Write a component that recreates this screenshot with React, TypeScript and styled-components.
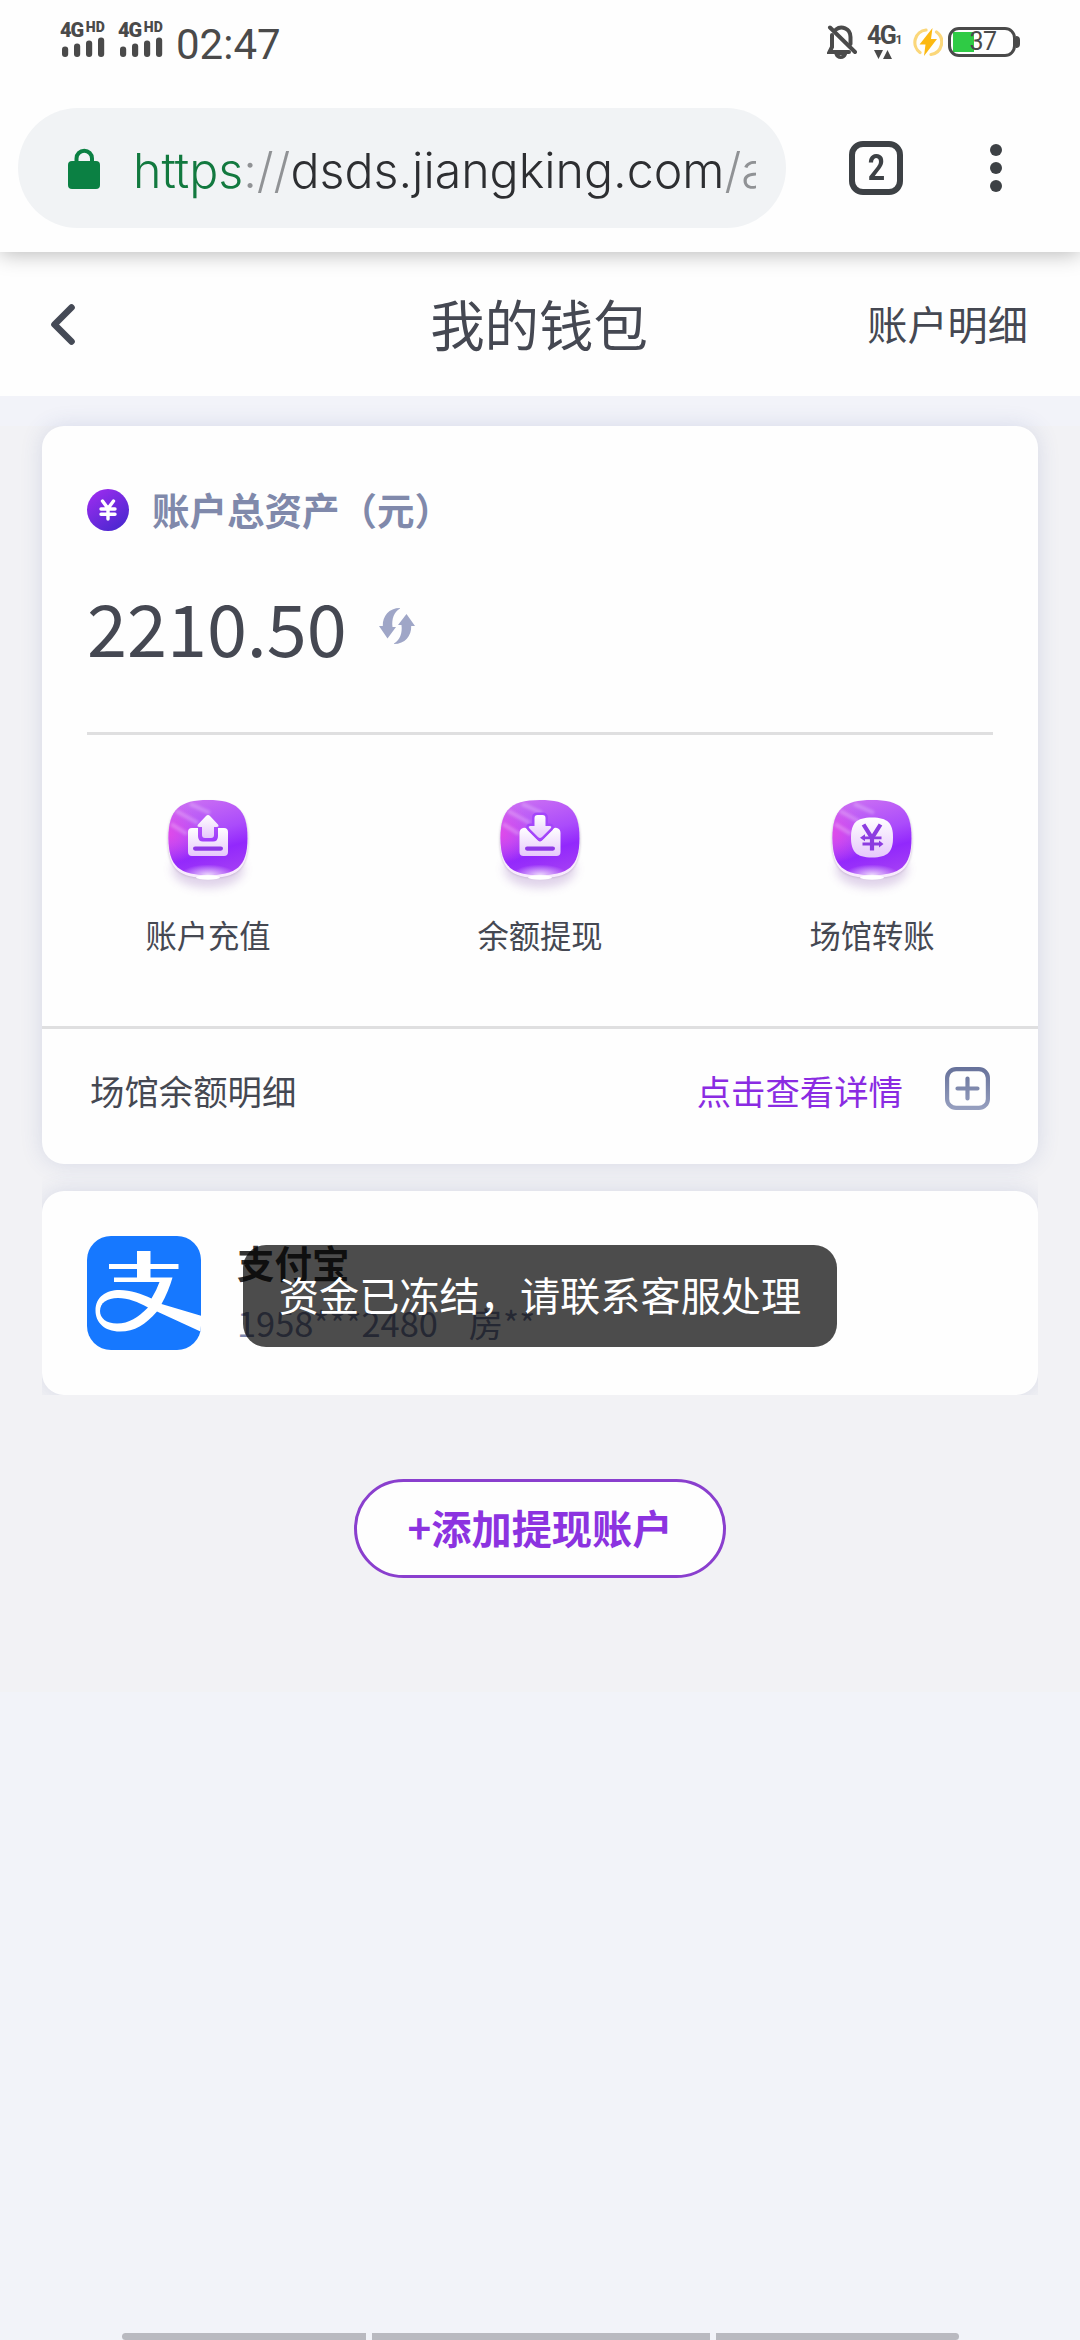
import React from "react";
import styled, { createGlobalStyle } from "styled-components";

const cjk = `"Noto Sans CJK SC", "Noto Sans", sans-serif`;

const GlobalStyle = createGlobalStyle`
  *, *::before, *::after { box-sizing: border-box; }
  body { margin: 0; background: #f2f3f9; font-family: ${cjk}; color: #454852; }
  button { font: inherit; color: inherit; background: none; border: 0; padding: 0; }
  svg { display: block; flex: none; }
`;

const Screen = styled.div`
  position: relative;
  width: 1080px;
  height: 2340px;
  overflow: hidden;
  display: flex;
  flex-direction: column;
`;

const StatusBar = styled.div`
  position: relative;
  z-index: 2;
  height: 84px;
  flex: none;
  background: #fefefe;
  display: flex;
  align-items: flex-start;
  justify-content: space-between;
  padding: 0 60px;
  color: #4a4a4a;
  font-family: Roboto, sans-serif;
`;

const StatusGroup = styled.div`
  display: flex;
  align-items: flex-start;
`;

const Signal = styled.div`
  width: 58px;
  padding-top: 20px;
`;

const NetLabel = styled.div`
  display: flex;
  align-items: flex-start;
  height: 17px;
  font-size: 20px;
  line-height: 20px;
  font-weight: 900;
  letter-spacing: -1.2px;
`;

const HdLabel = styled.span`
  font-size: 14px;
  line-height: 15px;
  letter-spacing: 0;
  margin-left: 3px;
`;

const Time = styled.div`
  font-size: 42px;
  line-height: 48px;
  padding-top: 21px;
`;

const MobileData = styled.div`
  width: 36px;
  margin: 24px 10px 0 10px;
  font-size: 25px;
  line-height: 24px;
  font-weight: 700;
  letter-spacing: -1.5px;
  white-space: nowrap;
  small { font-size: 12px; }
`;

const Battery = styled.div`
  margin: 27px 0 0 5px;
  display: flex;
  align-items: center;
`;

const BatteryShell = styled.div`
  width: 68px;
  height: 30px;
  border: 3px solid #4a4a4a;
  border-radius: 11px;
  padding-left: 2px;
  display: flex;
  align-items: center;
  justify-content: center;
  background: linear-gradient(#2fcb45, #2fcb45) 2px 2px / 21px 20px no-repeat;
  font-size: 25px;
  font-weight: 400;
  letter-spacing: -0.5px;
  line-height: 24px;
`;

const BatteryTip = styled.div`
  width: 4px;
  height: 12px;
  background: #4a4a4a;
  border-radius: 0 4px 4px 0;
`;

const BrowserBar = styled.div`
  height: 168px;
  flex: none;
  background: #fefefe;
  display: flex;
  align-items: center;
  padding: 0 70px 0 18px;
  position: relative;
  z-index: 1;
  box-shadow: 0 2px 20px rgba(0, 0, 0, 0.28);
`;

const AddressPill = styled.div`
  width: 768px;
  height: 120px;
  border-radius: 60px;
  background: #f1f3f5;
  display: flex;
  align-items: center;
  padding: 0 30px 0 50px;
`;

const Address = styled.div`
  width: 626px;
  margin: 5px 0 0 32px;
  overflow: hidden;
  white-space: nowrap;
  font-family: Inter, sans-serif;
  font-weight: 300;
  font-size: 48.3px;
  line-height: 64px;
  color: #2d2e31;
`;

const Scheme = styled.span`color: #12793f;`;
const Faint = styled.span`color: #909295;`;

const TabCount = styled.div`
  width: 54px;
  height: 54px;
  margin-left: 63px;
  border: 6px solid #3d4145;
  border-radius: 14px;
  display: flex;
  align-items: center;
  justify-content: center;
  font: 700 36px/42px Roboto, sans-serif;
  color: #3d4145;
  span { transform: scaleX(0.84); }
`;

const MenuDots = styled.div`
  margin-left: 87px;
  display: grid;
  gap: 6px;
  i { width: 12px; height: 12px; border-radius: 50%; background: #3d4145; }
`;

const PageHeader = styled.header`
  height: 144px;
  flex: none;
  background: #fefefe;
  display: grid;
  grid-template-columns: 1fr auto 1fr;
  align-items: center;
  padding: 0 52px 0 50px;
`;

const Title = styled.h1`
  margin: 0 0 3px;
  font-size: 54.4px;
  line-height: 80px;
  font-weight: 400;
`;

const HeaderLink = styled.a`
  justify-self: end;
  margin-bottom: 3px;
  font-size: 40.2px;
  line-height: 60px;
  font-weight: 400;
`;

const Content = styled.main`
  flex: none;
  margin-top: 30px;
  height: 1266px;
  background: #f2f2f5;
  padding: 0 42px;
`;

const Card = styled.section`
  background: #fefefe;
  border-radius: 22px;
  box-shadow: 0 0 22px rgba(60, 80, 145, 0.15);
`;

const WalletCard = styled(Card)`
  height: 738px;
  display: flex;
  flex-direction: column;
`;

const Summary = styled.div`
  margin: 0 45px;
  height: 309px;
  padding-top: 56px;
  border-bottom: 3px solid #dfdfe0;
`;

const AssetLabel = styled.div`
  display: flex;
  align-items: center;
  gap: 23px;
  height: 56px;
  color: #8089ab;
  font-size: 37.5px;
  line-height: 56px;
  font-weight: 700;
  span { margin-bottom: 3px; }
`;

const BalanceRow = styled.div`
  display: flex;
  align-items: center;
  gap: 32px;
  height: 100px;
  margin-top: 38px;
`;

const Balance = styled.div`
  font-size: 72px;
  line-height: 100px;
`;

const Actions = styled.div`
  height: 291px;
  display: grid;
  grid-template-columns: repeat(3, 1fr);
  padding-top: 54px;
`;

const Action = styled.button`
  display: flex;
  flex-direction: column;
  align-items: center;
  justify-content: flex-start;
  padding-top: 10px;
  font-size: 31.3px;
  line-height: 46px;
`;

const ActionLabel = styled.span`margin-top: 13px;`;

const DetailRow = styled.div`
  flex: 1;
  border-top: 3px solid #dfdfe0;
  padding: 34px 48px 0;
  display: flex;
  align-items: flex-start;
  font-size: 34.4px;
  line-height: 54px;
`;

const DetailLink = styled.a`
  margin: 0 42px 0 auto;
  color: #8a2be2;
`;

const AccountClip = styled.div`
  position: relative;
  margin-top: 27px;
  clip-path: inset(-27px 0 0 0);
`;

const AccountCard = styled(Card)`
  height: 204px;
  padding: 45px;
  display: flex;
  gap: 36px;
`;

const AccountInfo = styled.div`margin-top: -1px;`;

const AccountName = styled.div`
  font-size: 37.5px;
  line-height: 54px;
  font-weight: 700;
  color: #333;
`;

const AccountNumber = styled.div`
  margin-top: 8px;
  font-size: 34.4px;
  line-height: 50px;
  color: #7d86ab;
  white-space: pre;
`;

const Toast = styled.div`
  position: absolute;
  left: 201px;
  top: 54px;
  width: 594px;
  height: 102px;
  border-radius: 23px;
  background: rgba(0, 0, 0, 0.7);
  color: #fff;
  font-size: 40.2px;
  line-height: 98px;
  text-align: center;
  white-space: nowrap;
`;

const AddButton = styled.button`
  && {
    display: block;
    width: 372px;
    height: 99px;
    margin: 84px auto 0;
    padding-bottom: 3px;
    border: 3px solid #8a3fce;
    border-radius: 50px;
    background: #fefefe;
    color: #8c33e0;
    font-size: 40.2px;
    line-height: 90px;
    font-weight: 700;
  }
`;

const NavHandles = styled.div`
  margin-top: auto;
  display: grid;
  grid-template-columns: 244px 338px 243px;
  gap: 6px;
  justify-content: center;
  height: 7px;
  i { background: #b9b9c0; }
  i:first-child { border-radius: 4px 0 0 4px; }
  i:last-child { border-radius: 0 4px 4px 0; }
`;

const BellIcon = styled.svg`margin-top: 24px;`;
const ArrowsIcon = styled.svg`margin: -2px 0 0 7px;`;
const ChargingIcon = styled.svg`margin-top: 27px;`;
const PlusIcon = styled.svg`margin-top: 4px;`;

const SignalBlock = () => (
  <Signal>
    <NetLabel>4G<HdLabel>HD</HdLabel></NetLabel>
    <svg width="46" height="20" viewBox="0 0 46 20" fill="#4a4a4a">
      <rect x="2" y="9.5" width="6.2" height="10.5" rx="3" />
      <rect x="14" y="6.5" width="6.2" height="13.5" rx="3" />
      <rect x="26" y="3.5" width="6.2" height="16.5" rx="3" />
      <rect x="38" y="0.5" width="6.2" height="19.5" rx="3" />
    </svg>
  </Signal>
);

const MutedBell = () => (
  <BellIcon width="30" height="36" viewBox="0 0 30 36" fill="none" stroke="#4a4a4a" strokeWidth="4" strokeLinecap="round">
    <path d="M5 11v12L2.500 28H22M9 5.500C14 1.500 23.500 4 23.500 13v7" />
    <path d="M9 30c1.500 4.500 8 4.500 9.500 0z" strokeWidth="3" />
    <path d="M3 3.500l25 24.500" />
  </BellIcon>
);

const DataArrows = () => (
  <ArrowsIcon width="18" height="9" viewBox="0 0 18 9" fill="#4a4a4a">
    <path d="M0 0h9L4.500 9zM9 9h9L13.500 0z" />
  </ArrowsIcon>
);

const Charging = () => (
  <ChargingIcon width="30" height="30" viewBox="0 0 30 30" fill="none">
    <path d="M13 3A12.500 12.500 0 0 0 7 25.500M23.500 5A12.500 12.500 0 0 1 18 27.500" stroke="#fbd77a" strokeWidth="3.200" strokeLinecap="round" />
    <path d="M19.500 1L6.500 17.500h6L11 29l13-17h-6z" fill="#fcb912" />
  </ChargingIcon>
);

const Lock = () => (
  <svg width="33" height="43" viewBox="0 0 33 43">
    <path d="M8.500 16V11.500a7.700 7.700 0 0 1 15.500 0V16" fill="none" stroke="#0b8043" strokeWidth="4" />
    <rect x="0" y="14" width="32" height="28" rx="4" fill="#0b8043" />
  </svg>
);

const Coin = () => (
  <svg width="42" height="42" viewBox="0 0 42 42">
    <defs>
      <linearGradient id="coin" x1="0" y1="0" x2="0.7" y2="1">
        <stop offset="0" stopColor="#a32cf2" />
        <stop offset="1" stopColor="#4c28d0" />
      </linearGradient>
    </defs>
    <circle cx="21" cy="21" r="21" fill="url(#coin)" />
    <path d="M15.500 12l5.500 7.500 5.500-7.500M21 20v10M14 20h14M14 25.300h14" fill="none" stroke="#fff" strokeWidth="3.400" strokeLinecap="round" strokeLinejoin="round" />
  </svg>
);

const Refresh = () => (
  <svg width="36" height="36" viewBox="0 0 36 36" fill="#9fa6c7">
    <path d="M21 0C10 0 3.500 8 3.800 18H0l8.500 12.500L17 19h-3.500C12.500 11 15 4 21 .500z" />
    <path d="M15 36c11 0 17.500-8 17.200-18H36L27.500 6 19 17h3.500C23.500 25 21 32 15 35.500z" />
  </svg>
);

const squircle = "M40 1C68 1 79.500 10 79.500 39S68 76 40 76 .5 68 .5 39 12 1 40 1z";

const Badge = ({ id, children }: { id: string; children: React.ReactNode }) => (
  <svg width="96" height="100" viewBox="-8 0 96 100">
    <defs>
      <linearGradient id={`${id}-fill`} x1="0.3" y1="0" x2="0.6" y2="1">
        <stop offset="0" stopColor="#ca6ef3" />
        <stop offset="0.450" stopColor="#ab4cfb" />
        <stop offset="0.700" stopColor="#9228fc" />
        <stop offset="1" stopColor="#a33df5" />
      </linearGradient>
      <radialGradient id={`${id}-pink`} cx="0" cy="0.45" r="0.42">
        <stop offset="0" stopColor="#ee45e4" stopOpacity="0.75" />
        <stop offset="1" stopColor="#ee45e4" stopOpacity="0" />
      </radialGradient>
      <radialGradient id={`${id}-glow`} cx="0.5" cy="1" r="0.35" gradientTransform="translate(0 .6) scale(1 .4)">
        <stop offset="0" stopColor="#fff" stopOpacity="0.8" />
        <stop offset="1" stopColor="#fff" stopOpacity="0" />
      </radialGradient>
      <linearGradient id={`${id}-glyph`} x1="0" y1="0" x2="0" y2="1">
        <stop offset="0" stopColor="#fff" />
        <stop offset="1" stopColor="#e6c8fb" />
      </linearGradient>
      <filter id={`${id}-blur`} x="-30%" y="-30%" width="160%" height="160%"><feGaussianBlur stdDeviation="5" /></filter>
      <filter id={`${id}-soft`} x="-30%" y="-30%" width="160%" height="160%"><feGaussianBlur stdDeviation="1.5" /></filter>
      <clipPath id={`${id}-clip`}><path d={squircle} /></clipPath>
    </defs>
    <ellipse cx="40" cy="70" rx="36" ry="19" fill="#9a70bc" opacity="0.3" filter={`url(#${id}-blur)`} />
    <path d={squircle} transform="translate(0 2.500)" fill="#77618a" opacity="0.6" filter={`url(#${id}-soft)`} />
    <path d={squircle} transform="translate(-.5 2) scale(1.013)" fill="#f8eafd" />
    <path d={squircle} fill={`url(#${id}-fill)`} />
    <path d={squircle} fill={`url(#${id}-pink)`} />
    <g clipPath={`url(#${id}-clip)`} stroke="#fff" strokeWidth="4" opacity="0.25" filter={`url(#${id}-soft)`}>
      <path d="M8 12l22 12M3 25l16 10M22 5l20 9" />
    </g>
    <path d={squircle} fill={`url(#${id}-glow)`} />
    <ellipse cx="40" cy="78.500" rx="12" ry="2.200" fill="#fff" />
    <g fill={`url(#${id}-glyph)`}>{children}</g>
  </svg>
);

const trayGap = "#a446fa";
const upArrow = "M38 17q2-2 4 0l8 8.500q1.500 2.500-1.500 2.500H46v8q0 3-3 3h-6q-3 0-3-3v-8h-2.500q-3 0-1.500-2.500z";
const downArrow = "M37.500 16h5q3 0 3 3v8h4q3 0 1 2.500l-8.500 8.500q-2 2-4 0l-8.500-8.500Q27.500 27 30.500 27h4v-8q0-3 3-3z";

const Deposit = () => (
  <Badge id="deposit">
    <path d="M24 29h6v8q0 5.500 5 5.500h10q5 0 5-5.500v-8h6q4 0 4 4v20q0 4-4 4H24q-4 0-4-4V33q0-4 4-4z" />
    <rect x="25" y="47.500" width="30" height="4.200" rx="2.100" fill="#8e38e6" />
    <path d={upArrow} />
  </Badge>
);

const Withdraw = () => (
  <Badge id="withdraw">
    <path d="M23 29q2-1 4 1l11 11.500q2 2 4 0L53 30q2-2 4-1 3.500 1 3.500 5v19q0 4-4 4h-33q-4 0-4-4V34q0-4 3.500-5z" />
    <path d={downArrow} fill={trayGap} stroke={trayGap} strokeWidth="5" />
    <rect x="25" y="47.500" width="30" height="4.200" rx="2.100" fill="#8e38e6" />
    <path d={downArrow} />
  </Badge>
);

const Transfer = () => (
  <Badge id="transfer">
    <path d="M40 18.500c16 0 21 6 21 20s-5 20-21 20-21-6-21-20 5-20 21-20z" />
    <g fill="none" stroke="#8c3ce0" strokeWidth="4.200">
      <path d="M31.500 25.500L40 39l8.500-13.500M40 38v13.500" />
      <path d="M31 38.800h18.500M30.500 45h18.500" strokeWidth="2.800" />
    </g>
    <path d="M28 38.800l5-3.500v7zM51.500 45l-4.500-3.500v7z" fill="#8c3ce0" />
  </Badge>
);

const PlusBox = () => (
  <PlusIcon width="45" height="43" viewBox="0 0 45 43" fill="none" stroke="url(#plus)" strokeWidth="4.2" strokeLinecap="round">
    <defs>
      <linearGradient id="plus" gradientUnits="userSpaceOnUse" x1="0" y1="0" x2="0" y2="43">
        <stop offset="0" stopColor="#66719a" />
        <stop offset="1" stopColor="#97a0c0" />
      </linearGradient>
    </defs>
    <rect x="2.1" y="2.1" width="40.800" height="38.800" rx="9" />
    <path d="M12.500 21.500h20M22.500 11.500v20" />
  </PlusIcon>
);

const AlipayLogo = () => (
  <svg width="114" height="114" viewBox="0 0 114 114">
    <defs><clipPath id="ali"><rect width="114" height="114" rx="24" /></clipPath></defs>
    <g clipPath="url(#ali)">
      <rect width="114" height="114" fill="#1678ff" />
      <path fill="#fff" d="M50 15h13.500v13H91.500v5h-28v8.500h22q-4 14-11 26.500L118 81v16.500L70 75.500C58 89 48 95.500 33 95.500 17 95.500 8.500 86 8.500 74.500 8.500 61 19 54 32.500 54c11 0 22 4 32 8.500q5-8 8-16.500H27v-4.500h23V33H22v-5h28z" />
      <path fill="#1678ff" d="M61 71.500C51 66 41 62 31 62c-11 0-18 5-18 13 0 7 6 12.500 17 12.500 12 0 21-6 31-16z" />
    </g>
  </svg>
);

export default function App() {
  return (
    <Screen>
      <GlobalStyle />
      <StatusBar>
        <StatusGroup>
          <SignalBlock />
          <SignalBlock />
          <Time>02:47</Time>
        </StatusGroup>
        <StatusGroup>
          <MutedBell />
          <MobileData>4G<small>1</small><DataArrows /></MobileData>
          <Charging />
          <Battery>
            <BatteryShell>37</BatteryShell>
            <BatteryTip />
          </Battery>
        </StatusGroup>
      </StatusBar>
      <BrowserBar>
        <AddressPill>
          <Lock />
          <Address><Scheme>https</Scheme><Faint>://</Faint>dsds.jiangking.com<Faint>/a</Faint></Address>
        </AddressPill>
        <TabCount><span>2</span></TabCount>
        <MenuDots><i /><i /><i /></MenuDots>
      </BrowserBar>
      <PageHeader>
        <svg width="26" height="43" viewBox="0 0 26 43" fill="none" stroke="#454a56" strokeWidth="6.6" strokeLinecap="round" strokeLinejoin="round">
          <path d="M21.500 4.500L4.500 21.500l17 17" />
        </svg>
        <Title>我的钱包</Title>
        <HeaderLink>账户明细</HeaderLink>
      </PageHeader>
      <Content>
        <WalletCard>
          <Summary>
            <AssetLabel><Coin /><span>账户总资产（元）</span></AssetLabel>
            <BalanceRow><Balance>2210.50</Balance><Refresh /></BalanceRow>
          </Summary>
          <Actions>
            <Action><Deposit /><ActionLabel>账户充值</ActionLabel></Action>
            <Action><Withdraw /><ActionLabel>余额提现</ActionLabel></Action>
            <Action><Transfer /><ActionLabel>场馆转账</ActionLabel></Action>
          </Actions>
          <DetailRow>
            <span>场馆余额明细</span>
            <DetailLink>点击查看详情</DetailLink>
            <PlusBox />
          </DetailRow>
        </WalletCard>
        <AccountClip>
          <AccountCard>
            <AlipayLogo />
            <AccountInfo>
              <AccountName>支付宝</AccountName>
              <AccountNumber>{"1958***2480    房**"}</AccountNumber>
            </AccountInfo>
          </AccountCard>
          <Toast>资金已冻结，请联系客服处理</Toast>
        </AccountClip>
        <AddButton>+添加提现账户</AddButton>
      </Content>
      <NavHandles><i /><i /><i /></NavHandles>
    </Screen>
  );
}
